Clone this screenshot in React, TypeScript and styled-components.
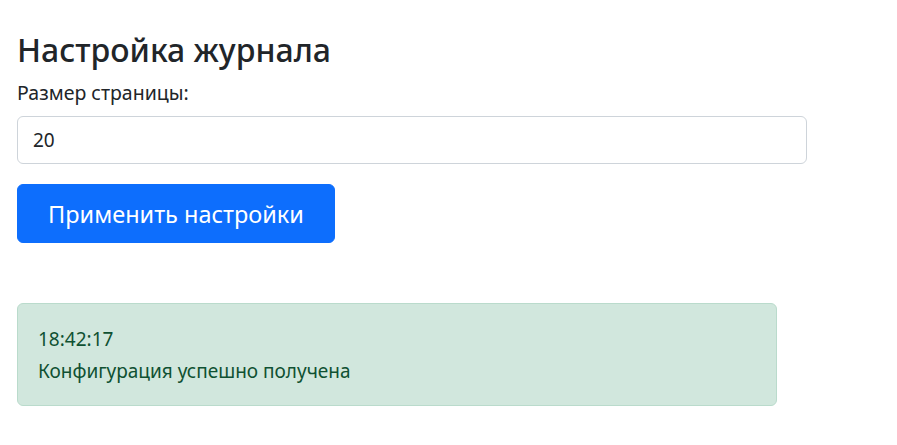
import React from "react";
import styled, { createGlobalStyle } from "styled-components";

const GlobalStyle = createGlobalStyle`
  html, body {
    margin: 0;
    padding: 0;
    background: #ffffff;
  }
  body {
    font-family: "Noto Sans", "Open Sans", sans-serif;
    color: #212529;
  }
`;

const Page = styled.div({
  display: "flex",
  flexDirection: "column",
  alignItems: "flex-start",
  padding: "30px 17px 0 17px",
});

const Title = styled.h2({
  margin: 0,
  fontSize: "32px",
  fontWeight: 500,
  lineHeight: "40px",
  color: "#212529",
});

const Label = styled.label({
  marginTop: "10px",
  fontSize: "19.5px",
  lineHeight: "26px",
});

const Input = styled.input({
  boxSizing: "border-box",
  marginTop: "10px",
  width: "790px",
  height: "48px",
  padding: "0 15px",
  fontFamily: "inherit",
  fontSize: "19px",
  color: "#212529",
  background: "#fff",
  border: "1px solid #ced4da",
  borderRadius: "6px",
  outline: "none",
});

const ApplyButton = styled.button({
  boxSizing: "border-box",
  marginTop: "20px",
  width: "318px",
  height: "59px",
  padding: 0,
  fontFamily: "inherit",
  fontSize: "23.5px",
  color: "#fff",
  background: "#0d6efd",
  border: "1px solid #0d6efd",
  borderRadius: "6px",
  cursor: "pointer",
});

const Alert = styled.div({
  boxSizing: "border-box",
  marginTop: "60px",
  width: "760px",
  height: "103px",
  padding: "23px 20px 0 20px",
  background: "#d1e7dd",
  border: "1px solid #badbcc",
  borderRadius: "6px",
  color: "#0f5132",
  fontSize: "19px",
});

const AlertLine = styled.div<{ gap?: number }>`
  line-height: 24px;
  margin-top: ${(p) => p.gap ?? 0}px;
`;

export default function App() {
  return (
    <>
      <GlobalStyle />
      <Page>
        <Title>Настройка журнала</Title>
        <Label htmlFor="pageSize">Размер страницы:</Label>
        <Input id="pageSize" type="text" defaultValue="20" />
        <ApplyButton>Применить настройки</ApplyButton>
        <Alert>
          <AlertLine>18:42:17</AlertLine>
          <AlertLine gap={8}>Конфигурация успешно получена</AlertLine>
        </Alert>
      </Page>
    </>
  );
}
